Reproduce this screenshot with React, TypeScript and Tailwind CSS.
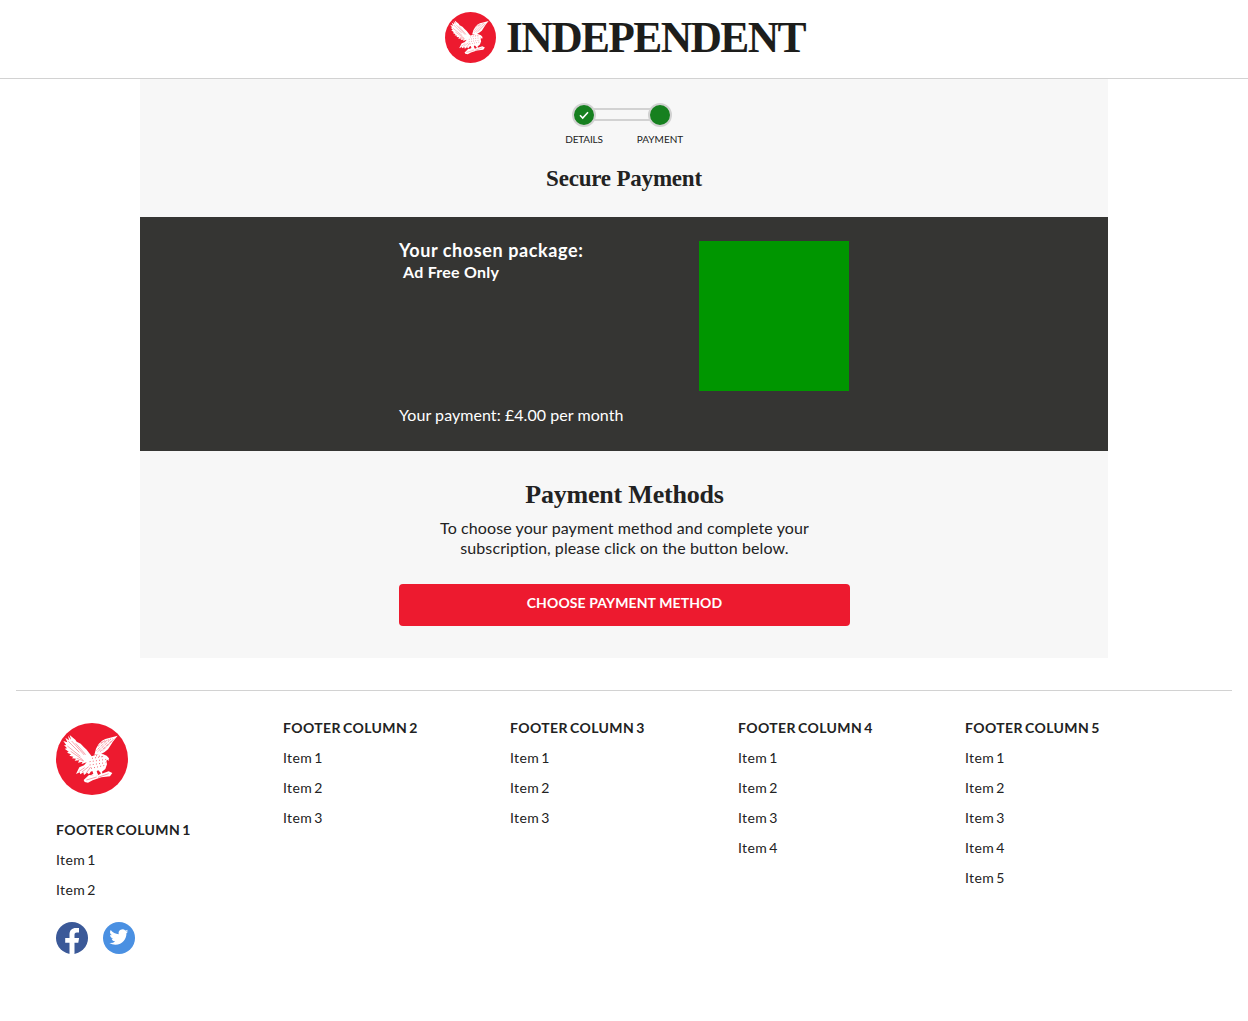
import React from "react";

function Eagle({ className }: { className: string }) {
  return (
    <svg viewBox="0 0 216 216" className={className} aria-label="Independent eagle">
      <circle cx="108" cy="108" r="108" fill="#ed1a2f" />
      <g fill="#fff">
        <path d="M41 36L45 50 36 38 39 52 28 44 34 58 22 54 31 67 24 66 33 76 26 77 38 86 33 89 45 94 40 98 52 101 48 106 60 107 56 113 70 112 66 119 80 116 76 123 92 118 84 127 70 133 60 153 71 148 73 154 82 148 84 156 93 149 99 154 104 146 109 144 112 152 104 157 118 160 127 157 124 151 122 144 127 142 135 151 130 155 140 156 138 146 148 138 153 124 151 113 155 110 157 115 159 106 152 98 142 94 131 92 116 97 107 100 100 91 92 80 84 73 74 62 62 56 58 50Z" />
        <path d="M83 171L99 156 120 158 158 145 169 150 162 160 136 163 110 172 96 179 86 177Z" />
        <path d="M115 95L120 77 128 63 138 53 148 48 185 38 177 48 170 57 162 70 156 79 146 87 134 94Z" />
      </g>
      <g stroke="#ed1a2f" fill="none" strokeWidth="1.2">
        <path d="M37 55l33 33M34 69l39 31M47 54l38 42M44 85l36 25M59 61l30 34M62 106l22 8M78 147l20-16M68 146l18-12M91 150l13-18M91 171l31-9M126 163l32-11" />
        <g strokeWidth="1.8" strokeDasharray="3 3">
          <path d="M122 82l28-27M125 86l36-34M132 86l38-35M141 82l34-35M126 70l19-17M134 59l35-12" />
        </g>
        <g strokeWidth="2.4" strokeDasharray="2.5 7">
          <path d="M108 106l30-5M101 116l50-7M101 126l48-7M105 136l42-9M120 98l28 4" />
        </g>
      </g>
    </svg>
  );
}

function Column({ n, items }: { n: number; items: number }) {
  return (
    <div>
      <h3 className="text-[14px] leading-[20px] font-bold tracking-[0.37px] [word-spacing:-1.5px] whitespace-nowrap">FOOTER COLUMN {n}</h3>
      <ul>
        {Array.from({ length: items }, (_, i) => (
          <li key={i} className="mt-[10px] text-[14px] leading-[20px] tracking-[0.4px] [word-spacing:-2px]">Item {i + 1}</li>
        ))}
      </ul>
    </div>
  );
}

export default function App() {
  return (
    <div className="min-h-[1021px] bg-white font-['Lato',sans-serif] text-[#222]">
      <header className="flex h-[79px] justify-center border-b border-[#d2d2d2] pt-[12px]">
        <div className="flex w-[362px] pl-[2px]">
          <Eagle className="size-[51px] shrink-0" />
          <svg viewBox="0 0 310 60" className="ml-[9px] h-[60px] w-[310px] shrink-0 overflow-visible" aria-label="Independent">
            <text x="1" y="39.5" fill="#1d1d1b" fontFamily="Liberation Serif, serif" fontWeight="700" fontSize="43.5" letterSpacing="-1.6" textLength="299" lengthAdjust="spacingAndGlyphs">INDEPENDENT</text>
          </svg>
        </div>
      </header>

      <main className="mx-auto h-[579px] w-[968px] bg-[#f7f7f7]">
        <div className="flex h-[138px] flex-col items-center pt-[24px]">
          <div className="mr-[4px] flex items-center">
            <div className="z-10 flex size-[24px] items-center justify-center rounded-full border-2 border-[#d2d2d2] bg-[#16801f]">
              <svg viewBox="0 0 10 10" className="size-[10px]"><path d="M1 5.3L3.7 8 9 2.2" fill="none" stroke="#fff" strokeWidth="1.6" /></svg>
            </div>
            <div className="-mx-[2px] mb-px h-[13px] w-[56px] border-y-2 border-[#d2d2d2]" />
            <div className="z-10 size-[24px] rounded-full border-2 border-[#d2d2d2] bg-[#16801f]" />
          </div>
          <div className="mt-[5px] mr-[4px] grid w-[152px] grid-cols-2 text-center text-[10px] leading-[14px]">
            <span className="tracking-[-0.2px]">DETAILS</span>
            <span>PAYMENT</span>
          </div>
          <h1 className="mt-[19px] font-['Liberation_Serif',serif] text-[23px] leading-[28px] font-bold tracking-[-0.2px]">Secure Payment</h1>
        </div>

        <section className="h-[234px] bg-[#353533] pt-[24px] text-white">
          <div className="mx-auto w-[450px]">
            <div className="flex h-[150px] justify-between">
              <div className="-mt-px font-bold whitespace-nowrap">
                <h2 className="text-[18px] leading-[20px] tracking-[0.6px]">Your chosen package:</h2>
                <p className="mt-[2px] ml-[4px] text-[16px] leading-[20px] tracking-[0.25px]">Ad Free Only</p>
              </div>
              <div className="size-[150px] bg-[#009600]" />
            </div>
            <p className="mt-[14px] text-[16px] leading-[20px] tracking-[0.06px]">Your payment: £4.00 per month</p>
          </div>
        </section>

        <section className="mx-auto flex w-[451px] flex-col items-center pt-[28px]">
          <h2 className="ml-px font-['Liberation_Serif',serif] text-[26px] leading-[32px] font-bold tracking-[-0.2px]">Payment Methods</h2>
          <p className="mt-[7px] ml-px text-center text-[16px] leading-[20px] tracking-[0.1px] whitespace-nowrap">
            To choose your payment method and complete your
            <br />
            subscription, please click on the button below.
          </p>
          <button className="mt-[26px] h-[42px] w-full rounded-[4px] bg-[#ed1a2f] pb-[5px] pl-px text-[14px] leading-[20px] font-bold tracking-[0.1px] text-white">CHOOSE PAYMENT METHOD</button>
        </section>
      </main>

      <footer className="mx-4 mt-8 grid grid-cols-[227px_227px_228px_227px_1fr] border-t border-[#d2d2d2] pt-[27px] pl-[40px]">
        <div>
          <Eagle className="mt-[5px] mb-[25px] size-[72px]" />
          <Column n={1} items={2} />
          <div className="mt-[22px] flex gap-[15px]">
            <svg viewBox="0 0 32 32" className="size-[32px]" aria-label="Facebook">
              <circle cx="16" cy="16" r="16" fill="#3b5998" />
              <path d="M13.5 32V20.8H9.2V16h4.3v-3.5c0-4.3 2.5-6.6 6.4-6.6 1.3 0 2.5.1 3.1.2v4.4h-2.1c-2 0-2.4 1-2.4 2.4V16h4.6l-.8 4.8h-3.8V31.7Q16 32.2 13.5 32Z" fill="#fff" />
            </svg>
            <svg viewBox="0 0 32 32" className="size-[32px]" aria-label="Twitter">
              <circle cx="16" cy="16" r="16" fill="#4a90e2" />
              <path transform="translate(6.4 5.6) scale(.79)" fill="#fff" d="M23.954 4.569a10 10 0 0 1-2.825.775 4.958 4.958 0 0 0 2.163-2.723 9.99 9.99 0 0 1-3.127 1.184 4.92 4.92 0 0 0-8.384 4.482A13.98 13.98 0 0 1 1.64 3.162a4.92 4.92 0 0 0 1.524 6.574 4.9 4.9 0 0 1-2.229-.616v.061a4.93 4.93 0 0 0 3.946 4.827 5 5 0 0 1-2.212.085 4.94 4.94 0 0 0 4.604 3.417A9.87 9.87 0 0 1 0 19.54a13.94 13.94 0 0 0 7.548 2.212c9.142 0 14.307-7.721 13.995-14.646a10 10 0 0 0 2.411-2.537Z" />
            </svg>
          </div>
        </div>
        <Column n={2} items={3} />
        <Column n={3} items={3} />
        <Column n={4} items={4} />
        <Column n={5} items={5} />
      </footer>
    </div>
  );
}
